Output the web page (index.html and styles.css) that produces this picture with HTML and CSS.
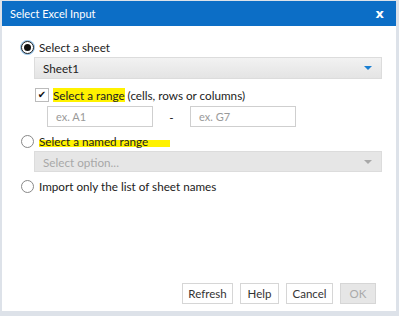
FILE: index.html
```html
<!DOCTYPE html>
<html lang="en">

<head>
    <meta charset="UTF-8">
    <meta name="viewport" content="width=device-width, initial-scale=1.0">
    <title>Select Excel Input</title>
    <link rel="stylesheet" href="styles.css">
</head>

<body>
    <div class="dialog">
        <div class="title_bar">
            <span class="title_text">Select Excel Input</span>
            <span class="title_close">x</span>
        </div>

        <div class="dialog_body">
            <div class="opt_row row_sheet">
                <span class="radio checked"></span>
                <span class="opt_label">Select a sheet</span>
            </div>
            <div class="select_box">
                <span class="select_text">Sheet1</span>
                <span class="select_arrow"></span>
            </div>

            <div class="check_row">
                <span class="check_box">&#10004;</span>
                <span class="opt_label"><span class="mark">Select a range</span> (cells, rows or columns)</span>
            </div>
            <div class="range_row">
                <div class="text_input">ex. A1</div>
                <span class="range_dash">-</span>
                <div class="text_input">ex. G7</div>
            </div>

            <div class="opt_row row_named">
                <span class="radio"></span>
                <span class="opt_label"><span class="mark_stroke">Select a named range</span></span>
            </div>
            <div class="select_box disabled">
                <span class="select_text">Select option...</span>
                <span class="select_arrow"></span>
            </div>

            <div class="opt_row row_import">
                <span class="radio"></span>
                <span class="opt_label">Import only the list of sheet names</span>
            </div>

            <div class="button_bar">
                <button class="btn btn_refresh">Refresh</button>
                <button class="btn btn_help">Help</button>
                <button class="btn btn_cancel">Cancel</button>
                <button class="btn btn_ok" disabled>OK</button>
            </div>
        </div>
    </div>
</body>

</html>
```

FILE: styles.css
```css
* {
    padding: 0;
    margin: 0;
    box-sizing: border-box;
}

body {
    background-color: #dde2e9;
    font-family: Lato, "Noto Sans", sans-serif;
    font-size: 11.7px;
    color: #222;
}

.dialog {
    margin: 1px 0 0 2px;
    width: 394px;
    height: 310px;
    background-color: #fff;
    display: flex;
    flex-direction: column;
}

.title_bar {
    height: 25px;
    background-color: #0c6ec6;
    color: #fff;
    display: flex;
    align-items: center;
    justify-content: space-between;
    padding: 0 12px 0 8px;
}

.title_text {
    font-size: 11px;
}

.title_close {
    font-size: 13px;
    font-weight: bold;
    font-family: "DejaVu Sans", sans-serif;
}

.dialog_body {
    flex: 1;
    display: flex;
    flex-direction: column;
    padding: 12px 14px 7px 19px;
}

.opt_row {
    height: 18px;
    display: flex;
    align-items: center;
    gap: 5px;
}

.row_named {
    margin-top: 5px;
}

.row_import {
    margin-top: 5px;
}

/*라디오 버튼*/
.radio {
    width: 13px;
    height: 13px;
    border-radius: 50%;
    border: 1px solid #888;
    background-color: #fff;
    display: flex;
    align-items: center;
    justify-content: center;
}

.radio.checked {
    border: 1.5px solid #222;
    box-shadow: 0 0 0 1px #9cc8ec;
}

.radio.checked::after {
    content: "";
    width: 7px;
    height: 7px;
    border-radius: 50%;
    background-color: #111;
}

.select_box {
    margin: 1px 0 0 13px;
    height: 22px;
    border: 1px solid #dcdcdc;
    background: linear-gradient(#f2f2f2, #e4e4e4);
    display: flex;
    align-items: center;
    justify-content: space-between;
    padding: 0 9px 0 8px;
}

.select_arrow {
    width: 0;
    height: 0;
    border-left: 4px solid transparent;
    border-right: 4px solid transparent;
    border-top: 4px solid #1a7fd2;
}

.select_box.disabled {
    height: 21px;
    background: #e6e6e6;
    color: #a8a8a8;
}

.select_box.disabled .select_arrow {
    border-top-color: #a8a8a8;
}

.check_row {
    margin: 8px 0 0 14px;
    height: 16px;
    display: flex;
    align-items: center;
    gap: 4px;
}

.check_box {
    width: 14px;
    height: 14px;
    border: 1px solid #bbb;
    font-size: 10px;
    line-height: 12px;
    text-align: center;
    color: #111;
    font-family: "DejaVu Sans", sans-serif;
}

.mark {
    background-color: #fff200;
}

.mark_stroke {
    background: linear-gradient(transparent 45%, #fff200 45%, #fff200 95%, transparent 95%);
    padding-right: 22px;
}

.range_row {
    margin: 3px 0 0 26px;
    display: flex;
    align-items: center;
}

.text_input {
    width: 106px;
    height: 21px;
    border: 1px solid #cfcfcf;
    color: #9a9a9a;
    font-size: 11px;
    line-height: 19px;
    padding-left: 8px;
}

.range_dash {
    width: 37px;
    text-align: center;
}

.button_bar {
    margin-top: auto;
    display: flex;
    justify-content: flex-end;
    gap: 7px;
    padding-right: 6px;
}

.btn {
    height: 21px;
    background-color: #fff;
    border: 1px solid #d6d6d6;
    font-family: Lato, "Noto Sans", sans-serif;
    font-size: 11.5px;
    color: #333;
}

.btn_refresh {
    width: 51px;
}

.btn_help {
    width: 39px;
}

.btn_cancel {
    width: 47px;
}

.btn_ok {
    width: 36px;
    background-color: #e6e6e6;
    color: #aaa;
}
```
